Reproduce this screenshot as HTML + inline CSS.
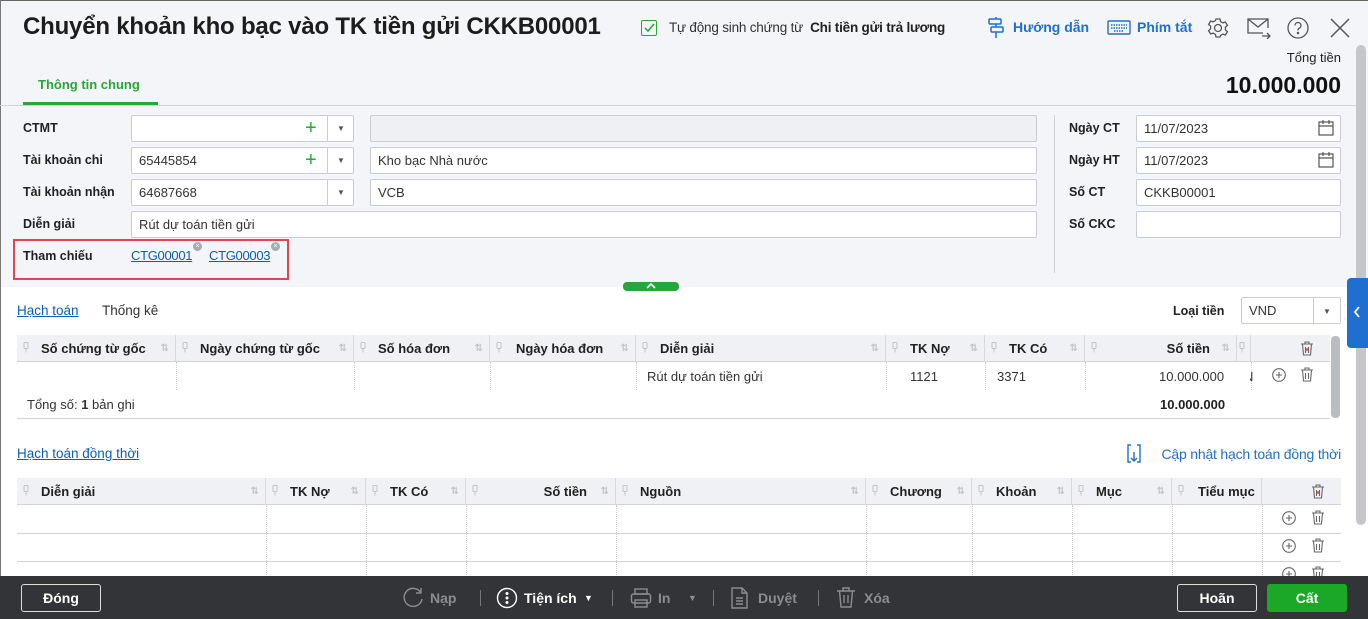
<!DOCTYPE html>
<html><head><meta charset="utf-8">
<style>
*{box-sizing:border-box;margin:0;padding:0}
body{width:1368px;height:619px;overflow:hidden;font-family:"Liberation Sans","DejaVu Sans",sans-serif;font-size:13px;color:#212121;background:#fff;position:relative}
.a{position:absolute}
.top{left:0;top:0;width:1368px;height:287px;background:#f4f5f8}
.lbl{font-weight:bold;font-size:12.5px}
.inp{position:absolute;background:#fff;border:1px solid #c9ccd2;border-radius:2px;height:27px;padding-left:7px;line-height:25px;font-size:13px;color:#333}
.th{position:absolute;top:0;height:27px;line-height:27px;font-weight:bold;font-size:13px;border-right:1px solid #d6d8dc}
.sort{position:absolute;right:6px;top:0;color:#c0c3c8;font-size:10px}
.vd{position:absolute;top:0;border-left:1px dotted #c9ccd2}
a{color:#0b5db6;text-decoration:underline}
.ftxt{position:absolute;top:590px;font-weight:bold;font-size:14px;color:#8a8d91}
.dd{position:absolute;color:#555;font-size:8px}
</style></head><body>
<div class="a top"></div>
<div class="a" style="left:0;top:0;width:1368px;height:1px;background:#666"></div>
<div class="a" style="left:0;top:0;width:1px;height:576px;background:#777"></div>

<div class="a" style="left:23px;top:13px;font-size:24px;font-weight:bold;color:#1d1d1d;letter-spacing:-0.2px">Chuyển khoản kho bạc vào TK tiền gửi CKKB00001</div>
<div class="a" style="left:641px;top:20px;width:16px;height:16px;border:1.5px solid #27a737;border-radius:2px"></div>
<svg class="a" style="left:644px;top:23px" width="11" height="10"><path d="M1 5 L4 8 L10 1" stroke="#27a737" stroke-width="1.5" fill="none"/></svg>
<div class="a" style="left:669px;top:20px;font-size:13.5px;color:#333;letter-spacing:-0.2px">Tự động sinh chứng từ &nbsp;<b style="color:#222">Chi tiền gửi trả lương</b></div>

<svg class="a" style="left:987px;top:17px" width="18" height="22" fill="none" stroke="#1f6fd0" stroke-width="1.5"><rect x="2" y="2" width="12" height="5" rx="1"/><rect x="4" y="10" width="12" height="5" rx="1"/><path d="M9 0v2M9 7v3M9 15v6"/></svg>
<div class="a" style="left:1013px;top:19px;font-size:14px;font-weight:bold;color:#1f6fd0">Hướng dẫn</div>
<svg class="a" style="left:1107px;top:20px" width="24" height="16" fill="none" stroke="#1f6fd0" stroke-width="1.4"><rect x="1" y="1" width="22" height="13" rx="1"/><path d="M4 5h16M4 8h16M7 11h10" stroke-dasharray="1.5 1"/></svg>
<div class="a" style="left:1137px;top:19px;font-size:14px;font-weight:bold;color:#1f6fd0">Phím tắt</div>
<svg class="a" style="left:1207px;top:17px" width="22" height="22" fill="none" stroke="#555" stroke-width="1.3"><circle cx="11" cy="11" r="3.5"/><path d="M9 2h4l.6 2.6 2.3 1.3 2.5-.9 2 3.4-2 1.8v2.6l2 1.8-2 3.4-2.5-.9-2.3 1.3L13 20H9l-.6-2.6-2.3-1.3-2.5.9-2-3.4 2-1.8V9.2l-2-1.8 2-3.4 2.5.9 2.3-1.3z"/></svg>
<svg class="a" style="left:1246px;top:17px" width="26" height="22" fill="none" stroke="#555" stroke-width="1.3"><path d="M17 16H2V2h20v9"/><path d="M2 2l10 8 10-8"/><path d="M16 19h8M21 16l3 3-3 3"/></svg>
<svg class="a" style="left:1287px;top:17px" width="22" height="22" fill="none" stroke="#555" stroke-width="1.3"><circle cx="11" cy="11" r="10"/><path d="M8 8.5a3 3 0 1 1 4 2.8c-1 .4-1 1-1 2.2"/><circle cx="11" cy="16" r=".6" fill="#555"/></svg>
<svg class="a" style="left:1330px;top:18px" width="20" height="20" stroke="#555" stroke-width="1.5"><path d="M1 1L19 19M19 1L1 19"/></svg>

<div class="a" style="right:27px;top:50px;font-size:13px;color:#222">Tổng tiền</div>
<div class="a" style="right:27px;top:72px;font-size:23px;font-weight:bold;color:#111">10.000.000</div>

<div class="a" style="left:38px;top:77px;font-size:13px;font-weight:bold;color:#27a737">Thông tin chung</div>
<div class="a" style="left:23px;top:102px;width:135px;height:3px;background:#27a737"></div>
<div class="a" style="left:0;top:105px;width:1356px;height:1px;background:#d0d3d8"></div>

<div class="a lbl" style="left:23px;top:121px">CTMT</div>
<div class="a lbl" style="left:23px;top:153px">Tài khoản chi</div>
<div class="a lbl" style="left:23px;top:185px">Tài khoản nhận</div>
<div class="a lbl" style="left:23px;top:217px">Diễn giải</div>

<div class="inp" style="left:131px;top:115px;width:223px"></div>
<div class="inp" style="left:131px;top:147px;width:223px">65445854</div>
<div class="inp" style="left:131px;top:179px;width:223px">64687668</div>
<div class="a" style="left:327px;top:116px;width:1px;height:25px;background:#c9ccd2"></div>
<div class="a" style="left:327px;top:148px;width:1px;height:25px;background:#c9ccd2"></div>
<div class="a" style="left:327px;top:180px;width:1px;height:25px;background:#c9ccd2"></div>
<div class="a" style="left:305px;top:115px;color:#27a737;font-size:20px;line-height:27px">+</div>
<div class="a" style="left:305px;top:147px;color:#27a737;font-size:20px;line-height:27px">+</div>
<div class="dd" style="left:337px;top:124px">▼</div>
<div class="dd" style="left:337px;top:156px">▼</div>
<div class="dd" style="left:337px;top:188px">▼</div>
<div class="inp" style="left:370px;top:115px;width:667px;background:#eef0f3"></div>
<div class="inp" style="left:370px;top:147px;width:667px">Kho bạc Nhà nước</div>
<div class="inp" style="left:370px;top:179px;width:667px">VCB</div>
<div class="inp" style="left:131px;top:211px;width:906px">Rút dự toán tiền gửi</div>

<div class="a" style="left:13px;top:239px;width:276px;height:41px;border:2px solid #e0474c"></div>
<div class="a lbl" style="left:23px;top:249px">Tham chiếu</div>
<a class="a" style="left:131px;top:248px;letter-spacing:-0.3px">CTG00001</a>
<a class="a" style="left:209px;top:248px;letter-spacing:-0.3px">CTG00003</a>
<div class="a" style="left:193px;top:242px;width:9px;height:9px;border-radius:50%;background:#a8abb0;color:#fff;font-size:7px;line-height:9px;text-align:center">×</div>
<div class="a" style="left:271px;top:242px;width:9px;height:9px;border-radius:50%;background:#a8abb0;color:#fff;font-size:7px;line-height:9px;text-align:center">×</div>

<div class="a" style="left:1054px;top:115px;width:1px;height:158px;background:#d0d3d8"></div>
<div class="a lbl" style="left:1069px;top:121px">Ngày CT</div>
<div class="a lbl" style="left:1069px;top:153px">Ngày HT</div>
<div class="a lbl" style="left:1069px;top:185px">Số CT</div>
<div class="a lbl" style="left:1069px;top:217px">Số CKC</div>
<div class="inp" style="left:1136px;top:115px;width:205px">11/07/2023</div>
<div class="inp" style="left:1136px;top:147px;width:205px">11/07/2023</div>
<div class="inp" style="left:1136px;top:179px;width:205px">CKKB00001</div>
<div class="inp" style="left:1136px;top:211px;width:205px"></div>
<svg class="a" style="left:1317px;top:119px" width="18" height="18" fill="none" stroke="#555" stroke-width="1.2"><rect x="2" y="3" width="14" height="13"/><path d="M2 7h14M6 1v4M12 1v4"/></svg>
<svg class="a" style="left:1317px;top:151px" width="18" height="18" fill="none" stroke="#555" stroke-width="1.2"><rect x="2" y="3" width="14" height="13"/><path d="M2 7h14M6 1v4M12 1v4"/></svg>

<div class="a" style="left:623px;top:282px;width:56px;height:9px;background:#27a737;border-radius:4px"></div>
<svg class="a" style="left:645px;top:282px" width="12" height="8"><path d="M2 6l4-4 4 4" stroke="#fff" stroke-width="1.6" fill="none"/></svg>

<div class="a" style="left:1356px;top:45px;width:10px;height:480px;background:#c4c6ca;border-radius:5px"></div>
<div class="a" style="left:1347px;top:278px;width:21px;height:70px;background:#1f6fd0;border-radius:4px 0 0 4px"></div>
<svg class="a" style="left:1352px;top:306px" width="10" height="12"><path d="M7 1L3 6l4 5" stroke="#fff" stroke-width="1.8" fill="none"/></svg>

<a class="a" style="left:17px;top:303px;font-size:13.5px">Hạch toán</a>
<div class="a" style="left:102px;top:303px;font-size:13.5px;color:#333">Thống kê</div>
<div class="a lbl" style="left:1173px;top:304px">Loại tiền</div>
<div class="inp" style="left:1241px;top:297px;width:100px">VND</div>
<div class="a" style="left:1313px;top:298px;width:1px;height:25px;background:#c9ccd2"></div>
<div class="dd" style="left:1323px;top:307px">▼</div>

<!-- table 1 -->
<div class="a" style="left:17px;top:335px;width:1313px;height:84px">
<div class="a" style="left:0;top:0;width:1313px;height:27px;background:#f0f1f4;border-bottom:1px solid #d0d3d8"></div>
<div class="th" style="left:0;width:159px"><span style="position:absolute;left:24px">Số chứng từ gốc</span><span class="sort">⇅</span></div>
<div class="th" style="left:159px;width:178px"><span style="position:absolute;left:24px">Ngày chứng từ gốc</span><span class="sort">⇅</span></div>
<div class="th" style="left:337px;width:136px"><span style="position:absolute;left:24px">Số hóa đơn</span><span class="sort">⇅</span></div>
<div class="th" style="left:473px;width:146px"><span style="position:absolute;left:26px">Ngày hóa đơn</span><span class="sort">⇅</span></div>
<div class="th" style="left:619px;width:250px"><span style="position:absolute;left:24px">Diễn giải</span><span class="sort">⇅</span></div>
<div class="th" style="left:869px;width:99px"><span style="position:absolute;left:24px">TK Nợ</span><span class="sort">⇅</span></div>
<div class="th" style="left:968px;width:100px"><span style="position:absolute;left:24px">TK Có</span><span class="sort">⇅</span></div>
<div class="th" style="left:1068px;width:152px"><span style="position:absolute;right:26px">Số tiền</span><span class="sort">⇅</span></div>
<div class="th" style="left:1220px;width:14px"></div>
<div class="vd" style="left:159px;top:27px;height:28px"></div><div class="vd" style="left:337px;top:27px;height:28px"></div><div class="vd" style="left:473px;top:27px;height:28px"></div><div class="vd" style="left:619px;top:27px;height:28px"></div><div class="vd" style="left:869px;top:27px;height:28px"></div><div class="vd" style="left:968px;top:27px;height:28px"></div><div class="vd" style="left:1068px;top:27px;height:28px"></div><div class="vd" style="left:1220px;top:27px;height:28px"></div><div class="vd" style="left:1234px;top:27px;height:28px"></div>
<div class="a" style="left:630px;top:34px;color:#333">Rút dự toán tiền gửi</div>
<div class="a" style="left:893px;top:34px;color:#333">1121</div>
<div class="a" style="left:980px;top:34px;color:#333">3371</div>
<div class="a" style="left:1142px;top:34px;color:#333">10.000.000</div>
<div class="a" style="left:1227px;top:34px;color:#333">N</div>
<div class="a" style="left:10px;top:62px;color:#333">Tổng số: <b>1</b> bản ghi</div>
<div class="a" style="left:1143px;top:62px;font-weight:bold">10.000.000</div>
<div class="a" style="left:0;top:83px;width:1313px;height:1px;background:#d0d3d8"></div>
</div>
<div class="a" style="left:1236px;top:362px;width:14px;height:28px;background:#fff"></div>
<div class="a" style="left:1331px;top:336px;width:9px;height:82px;background:#b9bcc1;border-radius:4px"></div>

<a class="a" style="left:17px;top:446px;font-size:13.5px">Hạch toán đồng thời</a>
<svg class="a" style="left:1126px;top:444px" width="16" height="20" fill="none" stroke="#1f6fd0" stroke-width="1.4"><path d="M5 1H2v17h3M11 1h3v17h-3M8 8v9M5 14l3 3 3-3"/></svg>
<div class="a" style="right:27px;top:446px;font-size:14px;color:#1f6fd0;letter-spacing:-0.2px">Cập nhật hạch toán đồng thời</div>

<!-- table 2 -->
<div class="a" style="left:17px;top:478px;width:1324px;height:98px;overflow:hidden">
<div class="a" style="left:0;top:0;width:1324px;height:27px;background:#f0f1f4;border-bottom:1px solid #d0d3d8"></div>
<div class="th" style="left:0;width:249px"><span style="position:absolute;left:24px">Diễn giải</span><span class="sort">⇅</span></div>
<div class="th" style="left:249px;width:100px"><span style="position:absolute;left:24px">TK Nợ</span><span class="sort">⇅</span></div>
<div class="th" style="left:349px;width:100px"><span style="position:absolute;left:24px">TK Có</span><span class="sort">⇅</span></div>
<div class="th" style="left:449px;width:150px"><span style="position:absolute;right:28px">Số tiền</span><span class="sort">⇅</span></div>
<div class="th" style="left:599px;width:250px"><span style="position:absolute;left:24px">Nguồn</span><span class="sort">⇅</span></div>
<div class="th" style="left:849px;width:106px"><span style="position:absolute;left:24px">Chương</span><span class="sort">⇅</span></div>
<div class="th" style="left:955px;width:100px"><span style="position:absolute;left:24px">Khoản</span><span class="sort">⇅</span></div>
<div class="th" style="left:1055px;width:100px"><span style="position:absolute;left:24px">Mục</span><span class="sort">⇅</span></div>
<div class="th" style="left:1155px;width:90px"><span style="position:absolute;left:26px">Tiểu mục</span></div>
<div class="vd" style="left:249px;top:27px;height:80px"></div><div class="vd" style="left:349px;top:27px;height:80px"></div><div class="vd" style="left:449px;top:27px;height:80px"></div><div class="vd" style="left:599px;top:27px;height:80px"></div><div class="vd" style="left:849px;top:27px;height:80px"></div><div class="vd" style="left:955px;top:27px;height:80px"></div><div class="vd" style="left:1055px;top:27px;height:80px"></div><div class="vd" style="left:1155px;top:27px;height:80px"></div><div class="vd" style="left:1245px;top:27px;height:80px"></div>
<div class="a" style="left:0;top:55px;width:1324px;height:1px;background:#d0d3d8"></div>
<div class="a" style="left:0;top:83px;width:1324px;height:1px;background:#d0d3d8"></div>
</div>

<svg width="0" height="0" style="position:absolute">
<defs>
<g id="trash" fill="none" stroke="#666" stroke-width="1.1"><path d="M1 3h12M5 3V1h4v2M2.5 3l1 11h7l1-11M5.5 6v6M8.5 6v6"/></g>
<g id="plus" fill="none" stroke="#666" stroke-width="1.1"><circle cx="7" cy="7" r="6.3"/><path d="M7 4v6M4 7h6"/></g>
<g id="pinI" fill="none" stroke="#c0c3c8" stroke-width="1"><rect x="1" y="0.5" width="4" height="6" rx="1"/><path d="M3 6.5v4"/></g>
</defs></svg>
<svg class="a" style="left:23px;top:342px" width="7" height="11"><use href="#pinI"/></svg>
<svg class="a" style="left:182px;top:342px" width="7" height="11"><use href="#pinI"/></svg>
<svg class="a" style="left:360px;top:342px" width="7" height="11"><use href="#pinI"/></svg>
<svg class="a" style="left:496px;top:342px" width="7" height="11"><use href="#pinI"/></svg>
<svg class="a" style="left:642px;top:342px" width="7" height="11"><use href="#pinI"/></svg>
<svg class="a" style="left:892px;top:342px" width="7" height="11"><use href="#pinI"/></svg>
<svg class="a" style="left:991px;top:342px" width="7" height="11"><use href="#pinI"/></svg>
<svg class="a" style="left:1091px;top:342px" width="7" height="11"><use href="#pinI"/></svg>
<svg class="a" style="left:1239px;top:342px" width="7" height="11"><use href="#pinI"/></svg>
<svg class="a" style="left:23px;top:485px" width="7" height="11"><use href="#pinI"/></svg>
<svg class="a" style="left:272px;top:485px" width="7" height="11"><use href="#pinI"/></svg>
<svg class="a" style="left:372px;top:485px" width="7" height="11"><use href="#pinI"/></svg>
<svg class="a" style="left:472px;top:485px" width="7" height="11"><use href="#pinI"/></svg>
<svg class="a" style="left:622px;top:485px" width="7" height="11"><use href="#pinI"/></svg>
<svg class="a" style="left:872px;top:485px" width="7" height="11"><use href="#pinI"/></svg>
<svg class="a" style="left:978px;top:485px" width="7" height="11"><use href="#pinI"/></svg>
<svg class="a" style="left:1078px;top:485px" width="7" height="11"><use href="#pinI"/></svg>
<svg class="a" style="left:1178px;top:485px" width="7" height="11"><use href="#pinI"/></svg>
<svg class="a" style="left:1300px;top:341px" width="14" height="16"><use href="#trash"/><path d="M5.5 7l3 3M8.5 7l-3 3" stroke="#e0474c" stroke-width="1"/></svg>
<svg class="a" style="left:1311px;top:484px" width="14" height="16"><use href="#trash"/><path d="M5.5 7l3 3M8.5 7l-3 3" stroke="#e0474c" stroke-width="1"/></svg>
<svg class="a" style="left:1272px;top:368px" width="14" height="14"><use href="#plus"/></svg>
<svg class="a" style="left:1300px;top:367px" width="14" height="16"><use href="#trash"/></svg>
<svg class="a" style="left:1282px;top:511px" width="14" height="14"><use href="#plus"/></svg>
<svg class="a" style="left:1311px;top:510px" width="14" height="16"><use href="#trash"/></svg>
<svg class="a" style="left:1282px;top:539px" width="14" height="14"><use href="#plus"/></svg>
<svg class="a" style="left:1311px;top:538px" width="14" height="16"><use href="#trash"/></svg>
<svg class="a" style="left:1282px;top:567px" width="14" height="9"><use href="#plus"/></svg>
<svg class="a" style="left:1311px;top:566px" width="14" height="10"><use href="#trash"/></svg>

<!-- footer -->
<div class="a" style="left:0;top:576px;width:1368px;height:43px;background:#333437"></div>
<div class="a" style="left:21px;top:584px;width:80px;height:28px;border:1px solid #ddd;border-radius:3px;color:#fff;font-weight:bold;font-size:14px;text-align:center;line-height:26px">Đóng</div>
<div class="a" style="left:1177px;top:584px;width:80px;height:28px;border:1px solid #ddd;border-radius:3px;color:#fff;font-weight:bold;font-size:14px;text-align:center;line-height:26px">Hoãn</div>
<div class="a" style="left:1267px;top:584px;width:80px;height:28px;background:#1aa826;border-radius:3px;color:#fff;font-weight:bold;font-size:14px;text-align:center;line-height:28px">Cất</div>

<svg class="a" style="left:402px;top:587px" width="22" height="22" fill="none" stroke="#8a8d91" stroke-width="1.4"><path d="M19 6A9 9 0 1 0 20 12"/><path d="M19 1v5h-5"/></svg>
<div class="ftxt" style="left:430px">Nạp</div>
<div class="a" style="left:480px;top:590px;width:1px;height:16px;background:#777"></div>
<svg class="a" style="left:496px;top:587px" width="22" height="22" fill="none" stroke="#fff" stroke-width="1.4"><circle cx="11" cy="11" r="9.5"/><circle cx="11" cy="6.5" r=".8" fill="#fff"/><circle cx="11" cy="11" r=".8" fill="#fff"/><circle cx="11" cy="15.5" r=".8" fill="#fff"/></svg>
<div class="ftxt" style="left:524px;color:#fff">Tiện ích</div>
<div class="a" style="left:584px;top:593px;color:#fff;font-size:9px">▼</div>
<div class="a" style="left:612px;top:590px;width:1px;height:16px;background:#777"></div>
<svg class="a" style="left:630px;top:587px" width="22" height="22" fill="none" stroke="#8a8d91" stroke-width="1.4"><rect x="5" y="2" width="12" height="5"/><rect x="1.5" y="7" width="19" height="9" rx="2"/><rect x="5" y="13" width="12" height="7"/></svg>
<div class="ftxt" style="left:658px">In</div>
<div class="a" style="left:688px;top:593px;color:#8a8d91;font-size:9px">▼</div>
<div class="a" style="left:713px;top:590px;width:1px;height:16px;background:#777"></div>
<svg class="a" style="left:730px;top:587px" width="20" height="22" fill="none" stroke="#8a8d91" stroke-width="1.4"><path d="M2 1h10l5 5v15H2z M12 1v5h5 M6 11h7M6 14h7M6 17h7"/></svg>
<div class="ftxt" style="left:758px">Duyệt</div>
<div class="a" style="left:818px;top:590px;width:1px;height:16px;background:#777"></div>
<svg class="a" style="left:836px;top:586px" width="20" height="23" fill="none" stroke="#8a8d91" stroke-width="1.4"><path d="M1 5h18M7 5V2h6v3M3.5 5l1.5 16h10l1.5-16M8 9v8M12 9v8"/></svg>
<div class="ftxt" style="left:864px">Xóa</div>
</body></html>
